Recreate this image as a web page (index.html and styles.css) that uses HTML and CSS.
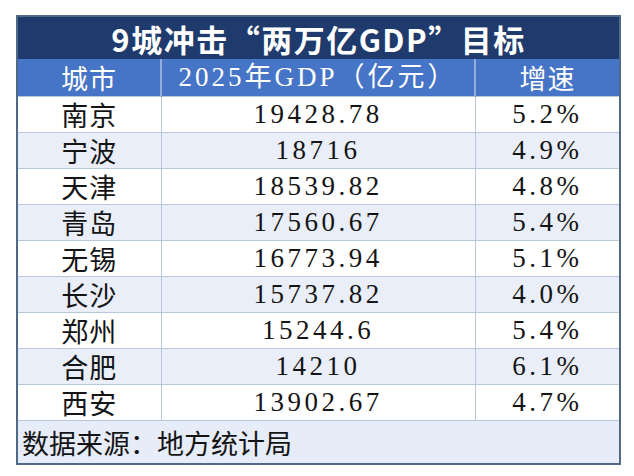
FILE: index.html
```html
<!DOCTYPE html>
<html lang="zh-CN">
<head>
<meta charset="utf-8">
<link rel="stylesheet" href="styles.css">
</head>
<body>
<table class="gdp">
  <colgroup>
    <col class="c-city">
    <col class="c-gdp">
    <col class="c-rate">
  </colgroup>
  <tr class="title"><td colspan="3">9城冲击“两万亿GDP”目标</td></tr>
  <tr class="head"><th>城市</th><th class="hnum">2025年GDP（亿元）</th><th>增速</th></tr>
  <tr class="row"><td class="city">南京</td><td class="num">19428.78</td><td class="num">5.2%</td></tr>
  <tr class="row alt"><td class="city">宁波</td><td class="num">18716</td><td class="num">4.9%</td></tr>
  <tr class="row"><td class="city">天津</td><td class="num">18539.82</td><td class="num">4.8%</td></tr>
  <tr class="row alt"><td class="city">青岛</td><td class="num">17560.67</td><td class="num">5.4%</td></tr>
  <tr class="row"><td class="city">无锡</td><td class="num">16773.94</td><td class="num">5.1%</td></tr>
  <tr class="row alt"><td class="city">长沙</td><td class="num">15737.82</td><td class="num">4.0%</td></tr>
  <tr class="row"><td class="city">郑州</td><td class="num">15244.6</td><td class="num">5.4%</td></tr>
  <tr class="row alt"><td class="city">合肥</td><td class="num">14210</td><td class="num">6.1%</td></tr>
  <tr class="row"><td class="city">西安</td><td class="num">13902.67</td><td class="num">4.7%</td></tr>
  <tr class="foot"><td colspan="3">数据来源：地方统计局</td></tr>
</table>
</body>
</html>
```
FILE: styles.css
```css
html, body {
  margin: 0;
  padding: 0;
  background: #ffffff;
}
body {
  padding: 15px 0 0 16px;
}
.gdp {
  border-collapse: collapse;
  table-layout: fixed;
  width: 603px;
  border: 2px solid #4f6a88;
  font-family: "Noto Sans CJK SC", sans-serif;
  color: #141414;
}
.c-city { width: 144px; }
.c-gdp { width: 314px; }
.c-rate { width: 145px; }
.gdp td, .gdp th {
  padding: 0;
  text-align: center;
  vertical-align: middle;
  line-height: 1;
}
.title td {
  height: 42px;
  background: #1f3a6c;
  color: #ffffff;
  font-weight: 700;
  font-size: 31px;
  letter-spacing: 1.5px;
}
.head th {
  height: 37px;
  background: #4674c6;
  color: #ffffff;
  font-weight: 400;
  font-size: 27px;
  border-left: 2px solid #93acdb;
  letter-spacing: 1px;
}
.head th:first-child { border-left: none; }
.head .hnum {
  font-family: "Liberation Serif", "Noto Sans CJK SC", serif;
  letter-spacing: 3px;
}
.row td {
  height: 35px;
  font-size: 27px;
  background: #ffffff;
  border: 1px solid #b9c7de;
}
.row.alt td { background: #e9eef8; }
.row td:first-child { border-left: none; }
.row td:last-child { border-right: none; }
.city { letter-spacing: 1px; }
.num {
  font-family: "Liberation Serif", "Noto Sans CJK SC", serif;
  letter-spacing: 3.5px;
}
.foot td {
  height: 42px;
  background: #e6ecf8;
  text-align: left;
  padding-left: 4px;
  font-size: 27px;
  border-top: 1px solid #b9c7de;
}
```
